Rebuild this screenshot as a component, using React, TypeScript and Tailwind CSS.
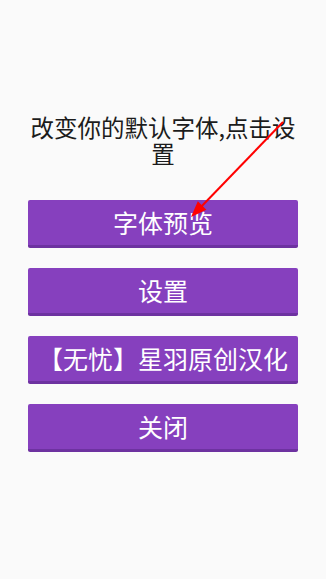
import React from 'react';

const buttons = ['字体预览', '设置', '【无忧】星羽原创汉化', '关闭'];

const App: React.FC = () => {
  return (
    <div
      className="relative w-[326px] h-[579px] bg-[#fafafa] overflow-hidden"
      style={{ fontFamily: '"Noto Sans CJK SC", "Noto Sans", sans-serif' }}
    >
      <div className="flex flex-col items-center px-[28px] pt-[114px]">
        <p className="w-full text-center text-[23.5px] leading-[26px] text-[#1c1c1c]">
          改变你的默认字体,点击设置
        </p>
        <div className="mt-[34px] flex w-full flex-col gap-[20px]">
          {buttons.map((label) => (
            <button
              key={label}
              className="h-[48px] w-full rounded-[2px] bg-[#8640be] border-b-[3px] border-[#6d32a0] text-[25px] leading-none text-white whitespace-nowrap"
            >
              {label}
            </button>
          ))}
        </div>
      </div>

      {/* red annotation arrow */}
      <svg className="absolute left-0 top-0 pointer-events-none" width="326" height="579">
        <line x1="283" y1="122" x2="199" y2="209" stroke="#ff0000" strokeWidth="2" />
        <polygon points="191,217 206.4,209.7 197.8,201.3" fill="#ff0000" />
      </svg>
    </div>
  );
};

export default App;
